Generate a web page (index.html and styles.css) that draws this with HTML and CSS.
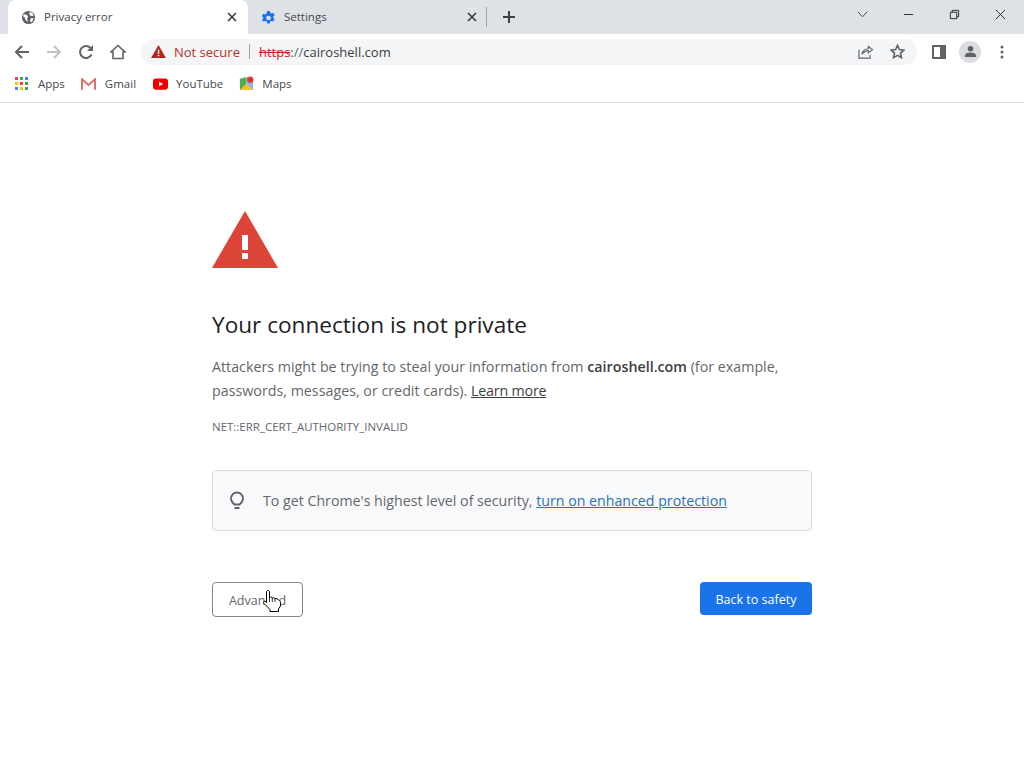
FILE: index.html

```html
<!DOCTYPE html>
<html lang="en">
<head>
  <meta charset="UTF-8">
  <title>Privacy error</title>
  <link rel="stylesheet" href="styles.css">
</head>
<body>
  <div class="tabstrip">
    <div class="tab tab-active">
      <svg class="tab-icon" viewBox="0 0 16 16"><circle cx="8" cy="8" r="7" fill="#5f6368"/><path d="M3 4.500l3 .5 1.500 2-1 2 1 3.500-2.500-1.500-1-3-2-1.500zM9 2l3 1 1.500 3-2.500.5-2-1.500zM10 9l3.500-.5-1.500 4-2 .5z" fill="#fff"/></svg>
      <span class="tab-title">Privacy error</span>
      <svg class="tab-close" viewBox="0 0 10 10"><path d="M1 1l8 8M9 1l-8 8" stroke="#3c4043" stroke-width="1.700"/></svg>
    </div>
    <div class="tab">
      <svg class="tab-icon" viewBox="0 0 16 16"><path fill-rule="evenodd" d="M6.500 1h3l.4 2 1.300.7 1.900-.7 1.500 2.600-1.500 1.300v1.500l1.500 1.300-1.500 2.600-1.900-.7-1.300.7-.4 2h-3l-.4-2-1.300-.7-1.900.7L.9 10.700l1.500-1.300V7.900L.9 6.600l1.500-2.600 1.900.7 1.300-.7zM8 6a2.500 2.500 0 1 0 0 5 2.500 2.500 0 0 0 0-5z" fill="#1a73e8"/></svg>
      <span class="tab-title">Settings</span>
      <svg class="tab-close" viewBox="0 0 10 10"><path d="M1 1l8 8M9 1l-8 8" stroke="#3c4043" stroke-width="1.700"/></svg>
    </div>
    <div class="tab-sep"></div>
    <svg class="new-tab" viewBox="0 0 12 12"><path d="M6 0v12M0 6h12" stroke="#3c4043" stroke-width="2"/></svg>
    <div class="window-buttons">
      <svg class="win-btn chevron" viewBox="0 0 12 12"><path d="M1 3l5 5.500L11 3" fill="none" stroke="#3c4043"/></svg>
      <svg class="win-btn" viewBox="0 0 12 12"><path d="M1 6h10" stroke="#222"/></svg>
      <svg class="win-btn" viewBox="0 0 12 12"><path d="M1.500 3.500h7v7h-7zM3.500 3.500v-2h7v7h-2" fill="none" stroke="#222"/></svg>
      <svg class="win-btn" viewBox="0 0 12 12"><path d="M1 1l10 10M11 1L1 11" stroke="#222"/></svg>
    </div>
  </div>

  <div class="toolbar">
    <svg class="nav-icon" viewBox="0 0 16 16"><path d="M15 8H2M8 2L2 8l6 6" fill="none" stroke="#5f6368" stroke-width="2"/></svg>
    <svg class="nav-icon" viewBox="0 0 16 16"><path d="M1 8h13M8 2l6 6-6 6" fill="none" stroke="#bdc1c6" stroke-width="2"/></svg>
    <svg class="nav-icon" viewBox="0 0 16 16"><path d="M13.500 10.500A6 6 0 1 1 12.500 4" fill="none" stroke="#5f6368" stroke-width="2"/><path d="M15 1v6H9z" fill="#5f6368"/></svg>
    <svg class="nav-icon" viewBox="0 0 16 16"><path d="M8 1.500L1 8h2v6.500h10V8h2z" fill="none" stroke="#5f6368" stroke-width="1.600"/></svg>
    <div class="omnibox">
      <svg class="warn-small" viewBox="0 0 16 14"><path d="M8 0l8 14H0z" fill="#b3261e"/><path d="M7.200 5h1.600v4.500H7.200zM7.200 10.500h1.600V12H7.200z" fill="#fff"/></svg>
      <span class="not-secure">Not secure</span>
      <span class="omni-sep"></span>
      <span class="url"><s class="scheme">https</s><span class="url-dim">://</span>cairoshell.com</span>
      <svg class="omni-icon share" viewBox="0 0 16 16"><path d="M1 6v9h12v-3" fill="none" stroke="#5f6368" stroke-width="1.200"/><path d="M4 11c1-4 4-6 7-6V2.500L15.500 6 11 9.500V7c-3 0-5 1.500-7 4z" fill="none" stroke="#5f6368" stroke-width="1.200"/></svg>
      <svg class="omni-icon star" viewBox="0 0 16 16"><path d="M8 1.500l2 4.500 4.800.5-3.600 3.200 1 4.800L8 12.100l-4.200 2.400 1-4.800L1.200 6.500 6 6z" fill="none" stroke="#5f6368" stroke-width="1.700"/></svg>
    </div>
    <svg class="panel-icon" viewBox="0 0 14 14"><path fill-rule="evenodd" d="M0 0h14v14H0zM2 2v10h6V2z" fill="#5f6368"/></svg>
    <div class="avatar">
      <svg viewBox="0 0 14 14"><circle cx="7" cy="4" r="3" fill="#5f6368"/><path d="M1 12c0-3 3-4 6-4s6 1 6 4v1H1z" fill="#5f6368"/></svg>
    </div>
    <svg class="menu-icon" viewBox="0 0 4 14"><circle cx="2" cy="2" r="1.500" fill="#5f6368"/><circle cx="2" cy="7" r="1.500" fill="#5f6368"/><circle cx="2" cy="12" r="1.500" fill="#5f6368"/></svg>
  </div>

  <div class="bookmarks">
    <div class="bookmark bm-apps">
      <div class="apps-grid">
        <i class="r"></i><i class="g"></i><i class="b"></i>
        <i class="y"></i><i class="r"></i><i class="g"></i>
        <i class="b"></i><i class="y"></i><i class="g"></i>
      </div>
      <span>Apps</span>
    </div>
    <div class="bookmark bm-gmail">
      <svg viewBox="0 0 16 12"><path d="M1 12V1l7 6 7-6v11" fill="none" stroke="#d9706b" stroke-width="2.200"/></svg>
      <span>Gmail</span>
    </div>
    <div class="bookmark bm-youtube">
      <svg viewBox="0 0 16 12"><rect width="16" height="12" rx="3" fill="#e00"/><path d="M6.500 3.500L11 6l-4.500 2.500z" fill="#fff"/></svg>
      <span>YouTube</span>
    </div>
    <div class="bookmark bm-maps">
      <svg viewBox="0 0 16 16"><path d="M1 3l7-2v13l-7 1z" fill="#4caf50"/><path d="M8 1l7 2v12l-7-1z" fill="#8ab4f8"/><path d="M1 15l7-7 7 7z" fill="#fbc02d"/><circle cx="12" cy="4" r="3.500" fill="#ea4335"/><circle cx="12" cy="4" r="1.200" fill="#a52714"/></svg>
      <span>Maps</span>
    </div>
  </div>

  <main class="interstitial">
    <svg class="warn-big" viewBox="0 0 66 57"><path d="M33 0l33 57H0z" fill="#db4437"/><path d="M30 24h6v15h-6zM30 42h6v6h-6z" fill="#fff"/></svg>
    <h1>Your connection is not private</h1>
    <p class="message">Attackers might be trying to steal your information from <b>cairoshell.com</b> (for example, passwords, messages, or credit cards). <a href="#">Learn more</a></p>
    <p class="error-code">NET::ERR_CERT_AUTHORITY_INVALID</p>
    <div class="promo">
      <svg class="bulb" viewBox="0 0 14 20"><path d="M4.500 13.500C2.500 12 1 10.500 1 7.500a6 6 0 0 1 12 0c0 3-1.500 4.500-3.500 6z" fill="none" stroke="#5f6368" stroke-width="1.800"/><path d="M4.500 17h5" stroke="#5f6368" stroke-width="2"/></svg>
      <span>To get Chrome's highest level of security, <a href="#">turn on enhanced protection</a></span>
    </div>
    <div class="actions">
      <button class="btn-advanced">Advanced</button>
      <button class="btn-safety">Back to safety</button>
    </div>
    <svg class="cursor" viewBox="0 0 18 22"><path d="M5 .5C6 .5 6.500 1 6.500 2V7.500C7.500 6.800 9 7 9.300 8 10.300 7.400 11.800 7.800 12 8.800 13 8.300 15 8.800 15.500 10 17 10.500 17.500 12 17.500 13V16L15.500 19V21.500H7V19.500L1 13.500C0 12.500 .5 11 2 11.200L3.500 12.500V2C3.500 1 4 .5 5 .5Z" fill="#fff" stroke="#000"/><path d="M6.500 7.500V12M9.300 8V12M12 9V12" fill="none" stroke="#000" stroke-width=".8"/></svg>
  </main>
</body>
</html>
```

FILE: styles.css

```css
* {
  box-sizing: border-box;
}
body {
  margin: 0;
  background: #fff;
  font-family: "Open Sans", "Noto Sans", sans-serif;
  color: #63676c;
  overflow: hidden;
}
svg {
  display: block;
  flex: none;
}

/* browser chrome */
.tabstrip {
  display: flex;
  align-items: center;
  height: 34px;
  padding-left: 8px;
  background: #dee1e6;
}
.tab {
  display: flex;
  align-items: center;
  width: 240px;
  height: 34px;
  padding: 0 11px 0 13px;
}
.tab-active {
  background: #fff;
  border-radius: 8px 8px 0 0;
}
.tab-icon {
  width: 15px;
  height: 15px;
}
.tab-title {
  flex: 1;
  margin: -2px 0 0 8px;
  font-size: 11.500px;
  color: #45494e;
}
.tab-close {
  width: 10px;
  height: 10px;
}
.tab-sep {
  width: 1px;
  height: 20px;
  margin-left: -2px;
  background: #9aa0a6;
}
.new-tab {
  width: 12px;
  height: 12px;
  margin-left: 16px;
}
.window-buttons {
  display: flex;
  align-items: center;
  gap: 35px;
  margin-left: auto;
  padding: 0 18px 6px 0;
}
.win-btn {
  width: 11px;
  height: 11px;
}
.toolbar {
  display: flex;
  align-items: center;
  height: 35px;
  padding: 0 15px 0 14px;
  background: #fff;
}
.nav-icon {
  width: 16px;
  height: 16px;
  margin-right: 16px;
}
.omnibox {
  display: flex;
  align-items: center;
  width: 776px;
  height: 26px;
  margin-left: -1px;
  padding: 0 12px 0 10px;
  border-radius: 13px;
  background: #f3f5f6;
  font-size: 13px;
}
.warn-small {
  width: 15px;
  height: 13px;
}
.not-secure {
  margin-left: 8px;
  color: #b8322a;
}
.omni-sep {
  width: 1px;
  height: 15px;
  margin: 0 9px;
  background: #9aa0a6;
}
.url {
  color: #3c4043;
}
.scheme {
  color: #c5221f;
}
.url-dim {
  color: #5f6368;
}
.omni-icon {
  width: 15px;
  height: 15px;
}
.share {
  margin-left: auto;
}
.star {
  margin-left: 17px;
}
.panel-icon {
  width: 14px;
  height: 14px;
  margin-left: 15px;
}
.avatar {
  display: flex;
  align-items: center;
  justify-content: center;
  width: 22px;
  height: 22px;
  margin-left: 13px;
  border-radius: 50%;
  background: #dadce0;
}
.avatar svg {
  width: 13px;
  height: 13px;
}
.menu-icon {
  width: 4px;
  height: 14px;
  margin-left: 19px;
}
.bookmarks {
  display: flex;
  align-items: center;
  height: 34px;
  padding: 0 0 4px 15px;
  border-bottom: 1px solid #dadce0;
  background: #fff;
  font-size: 11.500px;
  color: #45494e;
}
.bookmark {
  display: flex;
  align-items: center;
  gap: 10px;
  margin-right: 15px;
}
.bookmark svg {
  width: 15px;
  height: 12px;
}
.bm-gmail {
  gap: 9px;
  margin-left: 1px;
}
.bm-youtube {
  gap: 8px;
  margin-left: 2px;
}
.bm-maps {
  gap: 8px;
  margin-left: 1px;
}
.bm-maps svg {
  height: 15px;
}
.apps-grid {
  display: grid;
  grid-template-columns: repeat(3, 3px);
  gap: 2px;
}
.apps-grid i {
  display: block;
  height: 3px;
}
.apps-grid .r { background: #ea4335; }
.apps-grid .g { background: #34a853; }
.apps-grid .b { background: #4285f4; }
.apps-grid .y { background: #fbbc04; }

/* error page */
.interstitial {
  position: relative;
  width: 600px;
  margin: 0 auto;
  padding-top: 108px;
}
.warn-big {
  width: 66px;
  height: 57px;
}
h1 {
  margin: 42px 0 15px;
  font-size: 22.600px;
  font-weight: 400;
  line-height: 30px;
  color: #202124;
}
.message {
  margin: 0;
  font-size: 14.270px;
  line-height: 24px;
}
.message b {
  font-weight: 600;
  color: #3c4043;
}
.message a {
  color: #3c4043;
  letter-spacing: -.2px;
}
.error-code {
  margin: 14px 0 0;
  font-size: 11.470px;
  line-height: 20px;
}
.promo {
  display: flex;
  align-items: center;
  height: 61px;
  margin-top: 33px;
  padding-left: 17px;
  border: 1px solid #dadce0;
  border-radius: 4px;
  background: #f8f9fa;
  font-size: 14.200px;
}
.bulb {
  width: 14px;
  height: 20px;
  margin-right: 19px;
}
.promo a {
  color: #2a6fc9;
}
.actions {
  display: flex;
  align-items: flex-start;
  justify-content: space-between;
  margin-top: 51px;
}
button {
  height: 33px;
  padding: 2px 0 0;
  border-radius: 4px;
  font-family: inherit;
  font-size: 12.500px;
}
.btn-advanced {
  width: 91px;
  height: 35px;
  border: 1px solid #80868b;
  background: #fff;
  color: #63676c;
}
.btn-safety {
  width: 112px;
  border: none;
  background: #1a73e8;
  color: #fff;
}
.cursor {
  position: absolute;
  left: 51px;
  top: 487px;
  width: 18px;
  height: 22px;
}
```
